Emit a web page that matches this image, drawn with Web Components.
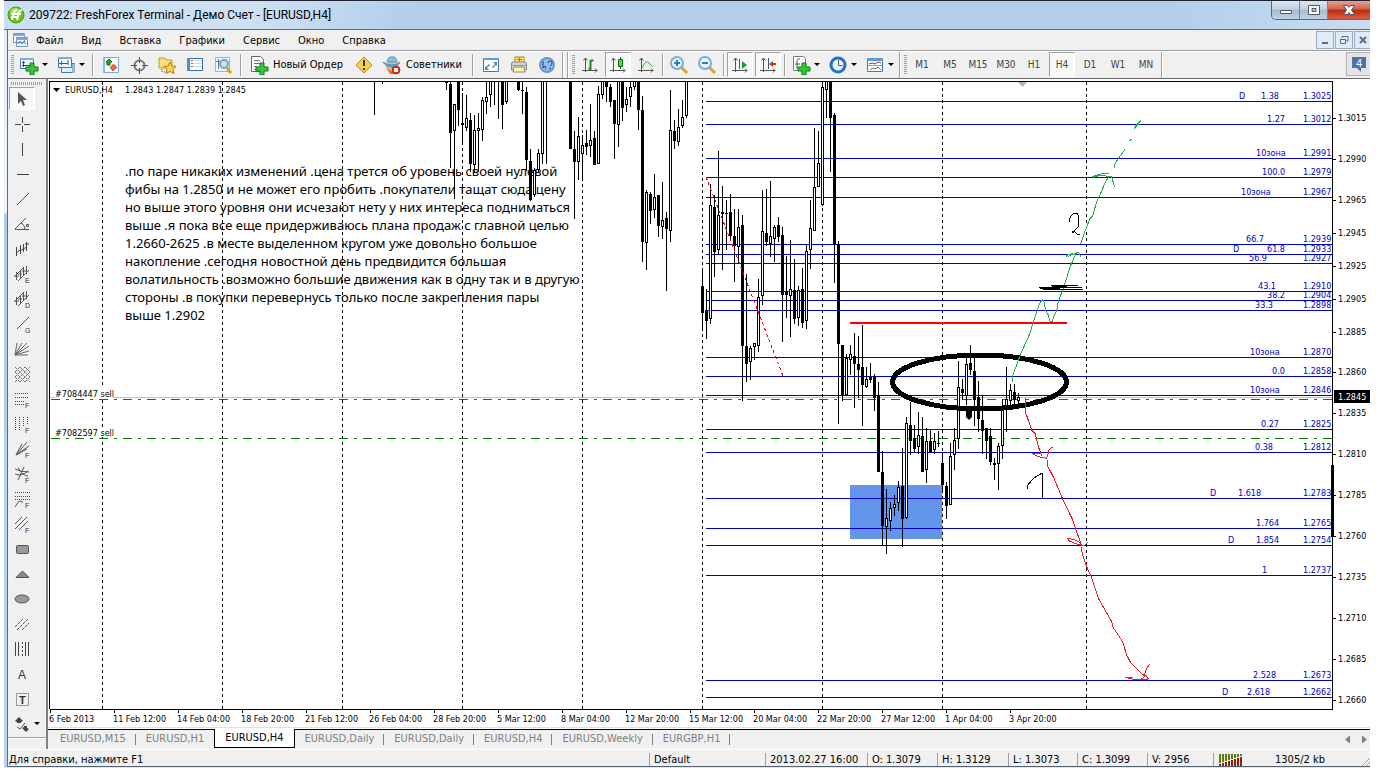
<!DOCTYPE html>
<html lang="ru">
<head>
<meta charset="utf-8">
<title>209722: FreshForex Terminal - Демо Счет - [EURUSD,H4]</title>
<style>
  body {
    margin: 0;
    background: #fff;
    font-family: "DejaVu Sans Condensed", "DejaVu Sans", sans-serif;
    font-size: 11px;
    color: #000;
  }
</style>
</head>
<body>
<terminal-window>
  <title-bar slot="title">209722: FreshForex Terminal - Демо Счет - [EURUSD,H4]</title-bar>
  <menu-bar slot="menu" items="Файл,Вид,Вставка,Графики,Сервис,Окно,Справка"></menu-bar>
  <tool-bar slot="tools">
    <tool-grip></tool-grip>
    <tool-button icon="newChart" label="Новый график" drop></tool-button>
    <tool-button icon="profiles" label="Профили" drop></tool-button>
    <tool-separator></tool-separator>
    <tool-button icon="market" label="Обзор рынка"></tool-button>
    <tool-button icon="target" label="Окно данных"></tool-button>
    <tool-button icon="navigator" label="Навигатор"></tool-button>
    <tool-button icon="terminal" label="Терминал"></tool-button>
    <tool-button icon="tester" label="Тестер"></tool-button>
    <tool-separator></tool-separator>
    <tool-button icon="order">Новый Ордер</tool-button>
    <tool-button icon="warning" label="MetaEditor"></tool-button>
    <tool-button icon="expert">Советники</tool-button>
    <tool-separator></tool-separator>
    <tool-button icon="fullscreen" label="Полный экран"></tool-button>
    <tool-button icon="print" label="Печать"></tool-button>
    <tool-button icon="help" label="Справка"></tool-button>
    <tool-separator end></tool-separator>
    <tool-separator end></tool-separator>
    <tool-grip></tool-grip>
    <tool-button icon="bars" label="Бары"></tool-button>
    <tool-button icon="candles" label="Свечи" pressed></tool-button>
    <tool-button icon="line" label="Линия"></tool-button>
    <tool-separator tight></tool-separator>
    <tool-button icon="zoomIn" label="Увеличить"></tool-button>
    <tool-button icon="zoomOut" label="Уменьшить"></tool-button>
    <tool-separator tight></tool-separator>
    <tool-button icon="autoScroll" label="Автопрокрутка" pressed></tool-button>
    <tool-button icon="shift" label="Сдвиг графика" pressed></tool-button>
    <tool-separator tight></tool-separator>
    <tool-button icon="indicators" label="Индикаторы" drop></tool-button>
    <tool-button icon="clock" label="Периоды" drop></tool-button>
    <tool-button icon="templates" label="Шаблоны" drop></tool-button>
    <tool-separator end></tool-separator>
    <tool-grip></tool-grip>
    <tool-button>M1</tool-button>
    <tool-button>M5</tool-button>
    <tool-button>M15</tool-button>
    <tool-button>M30</tool-button>
    <tool-button>H1</tool-button>
    <tool-button pressed>H4</tool-button>
    <tool-button>D1</tool-button>
    <tool-button>W1</tool-button>
    <tool-button>MN</tool-button>
    <tool-separator end></tool-separator>
    <chat-button slot="right" count="4"></chat-button>
  </tool-bar>
  <draw-bar slot="draw"></draw-bar>
  <price-chart slot="chart" symbol="EURUSD,H4" quotes="1.2843 1.2847 1.2839 1.2845">
    .по паре никаких изменений .цена трется об уровень своей нулевой<br>
    фибы на 1.2850 и не может его пробить .покупатели тащат сюда цену<br>
    но выше этого уровня они исчезают нету у них интереса подниматься<br>
    выше .я пока все еще придерживаюсь плана продаж с главной целью<br>
    1.2660-2625 .в месте выделенном кругом уже довольно большое<br>
    накопление .сегодня новостной день предвидится большая<br>
    волатильность .возможно большие движения как в одну так и в другую<br>
    стороны .в покупки перевернусь только после закрепления пары<br>
    выше 1.2902
  </price-chart>
  <chart-tabs slot="tabs" active="2" items="EURUSD,M15|EURUSD,H1|EURUSD,H4|EURUSD,Daily|EURUSD,Daily|EURUSD,H4|EURUSD,Weekly|EURGBP,H1"></chart-tabs>
  <status-bar slot="status"></status-bar>
</terminal-window>

<script>
const AXES = '<path d="M5.500 3v14M2 15.500h15M3.500 5.500l2-2.500 2 2.500M15 13.500l2 2-2 2" fill="none" stroke="#555"/>';

const icons = {
  logo: '<circle cx="10" cy="10" r="8" fill="#6fc31a" stroke="#4c9a0c"/><ellipse cx="9" cy="6" rx="5" ry="3" fill="#a4df5c"/><path d="M6 15l2-8q1-2 3-2M5 9h10M11 15l2-8q1-2 3-2M5 12h8" fill="none" stroke="#fff" stroke-width="2"/>',
  doc: '<path d="M3.500 3.500h11v9h-11zM6.500 7.500h11v9h-11z" fill="#f7fbff" stroke="#6b93c6"/><path d="M3 4h12v2H3zM6 8h12v2H6z" fill="#80a8d8"/><path d="M8 14l2-3 2 3 2-3 2 3" fill="none" stroke="#5b86ba"/>',
  newChart: '<path d="M1.500 3.500h13v10h-13z" fill="#eef7ff" stroke="#3f78b0"/><path d="M1 3h14v2H1z" fill="#79aee2"/><path d="M4.500 6v6M3 10.500h9M3 7.500h3" stroke="#446"/><path d="M11 8h4v4h4v4h-4v4h-4v-4H7v-4h4z" fill="#3cc440" stroke="#087c12"/>',
  profiles: '<path d="M5.500 8.500h13v9h-13z" fill="#e0eefc" stroke="#3f78b0"/><path d="M16 9h3v9h-3z" fill="#90b8dd"/><path d="M2.500 2.500h13v10h-13z" fill="#eef7ff" stroke="#3f78b0"/><path d="M2 2h14v2H2z" fill="#79aee2"/><path d="M5.500 6v4M3 8.500h9M12 5v5" stroke="#557"/>',
  market: '<path d="M2.500 2.500h15v15h-15z" fill="#f5faff" stroke="#7fa9d4"/><path d="M2 3h2v14H2z" fill="#8dbbe4"/><path d="M8 4l3 3H9v3H6V7H5z" fill="#23a52c" stroke="#0a7515"/><path d="M12 16l-3-4h2v-2h3v2h2z" fill="#ef6c34" stroke="#c8552c"/>',
  target: '<circle cx="10.500" cy="10.500" r="5" fill="none" stroke="#777" stroke-width="2"/><path d="M10.500 2v6M10.500 13v6M2 10.500h6M13 10.500h6" stroke="#555"/>',
  navigator: '<path d="M2 3h6l1 2h6v8H2z" fill="#f9de80" stroke="#c09a31"/><path d="M5 14v4M7 17h3" stroke="#555" stroke-dasharray="1 1"/><path d="M13 7l2 4 4 .5-3 3 1 4-4-2-4 2 1-4-3-3 4-.5z" fill="#ffd24e" stroke="#b57a10"/>',
  terminal: '<path d="M2.500 3.500h15v12h-15z" fill="#fff" stroke="#2e71b8"/><path d="M2 3h3v13H2z" fill="#4a90d4"/><path d="M6 5.500h2M6 8.500h2M6 11.500h2" stroke="#c44"/><path d="M9 5.500h8M9 8.500h8M9 11.500h8" stroke="#cfdae6"/>',
  tester: '<path d="M2.500 2.500h14v14h-14z" fill="#eef4fa" stroke="#9bb4d0"/><path d="M5.500 4v10M3 6.500h6M13 4v8" stroke="#777"/><circle cx="11" cy="9" r="4" fill="#c7e3f7" stroke="#7ba4c4" stroke-width="2"/><path d="M14 13l4 5" stroke="#d9a521" stroke-width="3"/>',
  order: '<path d="M2.500 1.500h9l3 3v12h-12z" fill="#fff" stroke="#666"/><path d="M5 5.500h6M5 8.500h6M5 11.500h3M5 14.500h3" stroke="#777"/><path d="M11 8h4v4h4v4h-4v4h-4v-4H7v-4h4z" fill="#3cc440" stroke="#087c12"/>',
  warning: '<path d="M10 2l8 8-8 8-8-8z" fill="#f9d04d" stroke="#b98a0f"/><path d="M10 5v6M10 13v2" stroke="#3b3413" stroke-width="2"/>',
  expert: '<circle cx="10" cy="12" r="6" fill="#f6b766"/><path d="M5 12q4 7 9 4l-3 3H8z" fill="#d56a22"/><path d="M5 7q1-6 5-5 4-1 5 5z" fill="#80c4ee" stroke="#4a93c0"/><path d="M1 7q9 6 17 0-2 5-8 5T1 7z" fill="#5faade" stroke="#4a93c0"/><circle cx="14" cy="15" r="4" fill="#dc2f1b" stroke="#b5301e"/><path d="M12 13h4v4h-4z" fill="#fff"/>',
  fullscreen: '<path d="M2.500 3.500h15v13h-15z" fill="#fff" stroke="#3e78b3"/><path d="M2 3h16v2H2z" fill="#5d9cd8"/><path d="M12 7h4v4l-1-1-3 3-1-1 3-3zM4 11l1 1 3-3 1 1-3 3 2 2H4z" fill="#5585b3"/>',
  print: '<path d="M6 8V2h9v6" fill="#ffe36b" stroke="#a98414"/><path d="M8 4.500h5M10.500 3v4" stroke="#a77f0b"/><path d="M2.500 9q0-2 2-2h11q2 0 2 2v6h-15z" fill="#d4d4d4" stroke="#888"/><path d="M5 12h10l1 5H4z" fill="#fff49a" stroke="#888"/><path d="M3 10.500h14" stroke="#999"/>',
  help: '<circle cx="10" cy="10" r="7" fill="#90bdec" stroke="#6c97c4" stroke-width="2"/><path d="M6 6v7l2-2 1 3M11 8q0-2 2-2t2 2-2 3M13 12.500v2" fill="none" stroke="#173f73"/>',
  bars: AXES + '<path d="M10.500 5v10M10.500 13.500h-2M10.500 5.500h3" stroke="#148a20" stroke-width="2" fill="none"/>',
  candles: AXES + '<path d="M12.500 2v12" stroke="#0b7418"/><path d="M10.500 4.500h4v7h-4z" fill="#4cd656" stroke="#0b7418"/>',
  line: AXES + '<path d="M6 13q4-9 7-5l4 4" fill="none" stroke="#3aa046"/>',
  zoomIn: '<path d="M12 12l6 6" stroke="#d7a726" stroke-width="3"/><circle cx="8" cy="8" r="6" fill="#e5f5ff" stroke="#78afd8" stroke-width="2"/><path d="M8 5v6M5 8h6" stroke="#3c7cac" stroke-width="2"/>',
  zoomOut: '<path d="M12 12l6 6" stroke="#d7a726" stroke-width="3"/><circle cx="8" cy="8" r="6" fill="#e5f5ff" stroke="#78afd8" stroke-width="2"/><path d="M5 8h6" stroke="#3c7cac" stroke-width="2"/>',
  autoScroll: AXES + '<path d="M9.500 4v10" stroke="#555"/><path d="M12 6l5 4-5 4z" fill="#1f9e2c"/>',
  shift: AXES + '<path d="M10.500 3v11" stroke="#357"/><path d="M11 9l4-3v2h3v2h-3v2z" fill="#c33a12"/>',
  indicators: '<path d="M3.500 1.500h9l2 2v12h-12v-14z" fill="#fff" stroke="#777"/><path d="M9 4q-3-1-3 3v7M4 9h5" fill="none" stroke="#555"/><path d="M11 8h4v4h4v4h-4v4h-4v-4H7v-4h4z" fill="#2fcc32" stroke="#087c12"/>',
  clock: '<circle cx="10" cy="10" r="7" fill="#eaf5ff" stroke="#1f70c8" stroke-width="3"/><path d="M10.500 5v5.500h4" fill="none" stroke="#555"/>',
  templates: '<path d="M2.500 3.500h15v13h-15z" fill="#fff" stroke="#3e78b3"/><path d="M2 3h16v3H2z" fill="#5d9cd8"/><path d="M4 9l3-1 3 1 3-2 3 1" fill="none" stroke="#a33317"/><path d="M3 10.500h14" stroke="#7fa8d2"/><path d="M5 15l3-2 2 1 3-2 3 3" fill="none" stroke="#2d9440"/>',

  cursor: '<path d="M6 3v12l3-3 2 5 2-1-2-5h4z" fill="#555"/>',
  cross: '<path d="M10.500 3v6M10.500 12v6M3 10.500h6M12 10.500h6" stroke="#444"/>',
  vline: '<path d="M10.500 4v13" stroke="#444"/>',
  hline: '<path d="M5 10.500h12" stroke="#444"/>',
  trend: '<path d="M5 16L17 4" stroke="#555"/>',
  angle: '<path d="M3 15.500h14M3 15L14 4M9 9q4 2 4 6" fill="none" stroke="#555"/><path d="M14.500 10.500h2v2h-2z" fill="none" stroke="#555"/>',
  cycle: '<path d="M4.500 8v9M4 14l4-3M8.500 6v9M8 12l3-2M11.500 5v8M11 10l4-2M14.500 3v9M13 5h4" fill="none" stroke="#444"/>',
  chanE: '<path d="M2 13L12 3M6 17L17 6M4.500 8v8M8.500 6v8M11.500 4v8M14.500 2v8M3 12h4M6 10h4M10 7h4" stroke="#555"/><text x="13" y="19">E</text>',
  chanD: '<path d="M2 13L12 3M6 17L17 6M4.500 8v8M8.500 6v8M11.500 4v8M14.500 2v8M3 12h4M6 10h4M10 7h4" stroke="#555"/><text x="13" y="19">D</text>',
  gannLine: '<path d="M5 15L17 3" stroke="#555"/><text x="13" y="19">G</text>',
  gannFan: '<path d="M3 16L5 4M3 16L10 4M3 16L15 4M3 16L17 7M3 16l14-4M3 16h13" stroke="#666"/>',
  gannGrid: '<path d="M3 3l15 15M3 8l10 10M8 3l10 10M3 13l5 5M13 3l5 5M3 8l5-5M3 13L13 3M3 18L18 3M8 18L18 8M13 18l5-5" stroke="#777" stroke-dasharray="3 1"/>',
  fibo: '<path d="M3 4.500h14M3 8.500h14M3 12.500h9M3 15.500h9" stroke="#444" stroke-dasharray="1 1"/><text x="13" y="19">F</text>',
  fiboTime: '<path d="M3.500 3v14M7.500 3v14M11.500 3v10M15.500 3v8" stroke="#444" stroke-dasharray="1 1"/><text x="13" y="19">F</text>',
  fiboFan: '<path d="M4 16L15 3M4 16L17 7M4 16l11-6M4 16L10 5" stroke="#555"/><text x="13" y="19">F</text>',
  fiboArc: '<path d="M3 5q5 3 14 3M3 10q6 3 13-3M12 3L6 16M6 4q5 8 10 8" fill="none" stroke="#555"/><text x="13" y="19">F</text>',
  fiboExp: '<path d="M3 3.500h15M3 7.500h15M3 10.500h15" stroke="#444" stroke-dasharray="1 1"/><path d="M3 18l4-6 4 1" fill="none" stroke="#555"/><text x="13" y="19">F</text>',
  fiboChan: '<path d="M3 10l7-7M3 15L15 3M7 16l9-9" stroke="#555"/><text x="13" y="19">F</text>',
  rect: '<rect x="4.500" y="6.500" width="12" height="8" rx="1" fill="#999" stroke="#555"/>',
  triangle: '<path d="M4 13.500L10.500 7l6.500 6.500z" fill="#888" stroke="#555"/>',
  ellipse: '<ellipse cx="10" cy="10" rx="7" ry="4" fill="#999" stroke="#555"/>',
  channel: '<path d="M3 13l8-8M5 16L16 5M10 16l7-7" stroke="#555" stroke-dasharray="3 1"/>',
  cycles: '<path d="M3.500 3v14M6.500 3v14M13.500 3v14M16.500 3v14" stroke="#444"/><path d="M10.500 3v14" stroke="#444" stroke-dasharray="2 2"/>',
  text: '<text x="6" y="15" style="font-size:12px">A</text>',
  label: '<path d="M4.500 4.500h12v12h-12z" fill="none" stroke="#444" stroke-dasharray="1 1"/><text x="7" y="15" style="font-size:11px;font-weight:bold">T</text>',
  arrows: '<path d="M7 3l4 4-2 1v1H5V8L3 7zM14 18l-4-4 2-1v-1h3v2l2 1z" fill="#444"/><path d="M5 13l3 2 5-6" fill="none" stroke="#555"/>'
};

class AppIcon extends HTMLElement {
  constructor() {
    super();
    this.attachShadow({ mode: 'open' });
  }

  connectedCallback() {
    this.shadowRoot.innerHTML = `
      <style>
        :host { display: block; flex: none; width: 20px; height: 20px; }
        svg { display: block; width: 100%; height: 100%; }
        text { font-size: 7px; fill: #333; }
      </style>
      <svg viewBox="0 0 20 20" aria-hidden="true">${icons[this.getAttribute('name')] || ''}</svg>
    `;
  }
}
customElements.define('app-icon', AppIcon);

class TerminalWindow extends HTMLElement {
  constructor() {
    super();
    this.attachShadow({ mode: 'open' }).innerHTML = `
      <style>
        :host {
          display: block;
          margin: 0 12px 0 4px;
          overflow: hidden;
          border-top: 1px solid #1f2430;
          border-bottom: 1px solid #dbe6f2;
          background: linear-gradient(#dbe9f8, #eef5fc 211px, #aecdec 214px, #b9d3ee);
        }
        .frame {
          margin-left: 3px;
          border-left: 1px solid #5f6e7d;
          border-bottom: 1px solid #53606e;
          background: #f0f0f0;
        }
        .work {
          display: grid;
          grid-template-columns: 40px minmax(0, 1fr);
        }
      </style>
      <slot name="title"></slot>
      <div class="frame">
        <slot name="menu"></slot>
        <slot name="tools"></slot>
        <div class="work">
          <slot name="draw"></slot>
          <main>
            <slot name="chart"></slot>
            <slot name="tabs"></slot>
          </main>
        </div>
        <slot name="status"></slot>
      </div>
    `;
  }
}
customElements.define('terminal-window', TerminalWindow);

class TitleBar extends HTMLElement {
  constructor() {
    super();
    this.attachShadow({ mode: 'open' }).innerHTML = `
      <style>
        :host {
          display: flex;
          align-items: flex-start;
          height: 28px;
          border-bottom: 1px solid #5f6e7d;
          background: linear-gradient(100deg, #c9dff4, #cfe1f3 18%, #b1cfeb 30%, #b1cfeb 85%, #cadcf0);
          font-family: Roboto, "Noto Sans", sans-serif;
          font-size: 12px;
        }
        .caption {
          display: flex;
          flex: 1;
          align-items: center;
          gap: 3px;
          height: 28px;
          padding-left: 2px;
        }
        .buttons {
          display: flex;
          border: 1px solid #55697f;
          border-width: 0 0 1px 1px;
          border-radius: 0 0 0 5px;
          overflow: hidden;
        }
        button {
          width: 28px;
          height: 18px;
          padding: 0;
          border: 0;
          border-right: 1px solid #6f8298;
          background: linear-gradient(#d9e4ef, #c3d2e2 45%, #a7bbd0 50%, #bed2e6);
        }
        .close {
          width: 42px;
          border-right: 0;
          background: linear-gradient(#e6a493, #d3604b 45%, #bb2a14 50%, #d8603f);
        }
        svg { display: block; margin: auto; }
      </style>
      <div class="caption"><app-icon name="logo"></app-icon><span><slot></slot></span></div>
      <div class="buttons">
        <button aria-label="Свернуть"><svg width="14" height="12"><path d="M1.500 6.500h11v3h-11z" fill="#fff" stroke="#505868"/></svg></button>
        <button aria-label="Развернуть"><svg width="14" height="12"><path d="M1.500 1.500h11v9h-11zM5 4.500h4v3H5z" fill="#fff" fill-rule="evenodd" stroke="#505868"/></svg></button>
        <button class="close" aria-label="Закрыть"><svg width="14" height="12"><path d="M1.500 1.500h4l1.500 2 1.500-2h4L9.500 6l3 4.500h-4L7 8.500l-1.500 2h-4l3-4.500z" fill="#fff" stroke="#505868"/></svg></button>
      </div>
    `;
  }
}
customElements.define('title-bar', TitleBar);

class MenuBar extends HTMLElement {
  constructor() {
    super();
    this.attachShadow({ mode: 'open' });
  }

  connectedCallback() {
    const items = this.getAttribute('items').split(',');
    this.shadowRoot.innerHTML = `
      <style>
        :host {
          display: flex;
          align-items: center;
          height: 20px;
          padding-left: 2px;
          border-bottom: 1px solid #a0a0a0;
        }
        nav { display: flex; flex: 1; margin-left: -3px; }
        nav button {
          padding: 0 9px;
          border: 0;
          background: none;
          font: inherit;
          font-size: 11px;
          color: inherit;
        }
        .mdi { display: flex; gap: 1px; }
        .mdi button {
          width: 18px;
          height: 18px;
          padding: 0;
          border: 1px solid #9aabbc;
          background: #dfecf8;
        }
        .mdi svg { display: block; margin: auto; }
        .mdi button:last-child { margin-right: -2px; }
      </style>
      <app-icon name="doc"></app-icon>
      <nav>${items.map((item) => `<button>${item}</button>`).join('')}</nav>
      <div class="mdi">
        <button aria-label="Свернуть"><svg width="12" height="12"><path d="M3 8h6v2H3z" fill="#5f6f80"/></svg></button>
        <button aria-label="Восстановить"><svg width="12" height="12"><path d="M4 4V2.500h6V7H8M2.500 5.500h5v4h-5z" fill="none" stroke="#5f6f80"/><path d="M4 2h6v1H4zM2 5h6v1H2z" fill="#5f6f80"/></svg></button>
        <button aria-label="Закрыть"><svg width="12" height="12"><path d="M3 3l6 6M9 3L3 9" stroke="#5f6f80" stroke-width="2"/></svg></button>
      </div>
    `;
  }
}
customElements.define('menu-bar', MenuBar);

class ToolBar extends HTMLElement {
  constructor() {
    super();
    this.attachShadow({ mode: 'open' }).innerHTML = `
      <style>
        :host {
          display: flex;
          height: 26px;
          padding-left: 2px;
          border-top: 1px solid #fff;
          border-bottom: 1px solid #696969;
        }
        .tools { display: flex; flex: 1; min-width: 0; }
      </style>
      <div class="tools"><slot></slot></div>
      <slot name="right"></slot>
    `;
  }
}
customElements.define('tool-bar', ToolBar);

class ToolGrip extends HTMLElement {
  constructor() {
    super();
    this.attachShadow({ mode: 'open' }).innerHTML = `
      <style>
        :host { display: block; flex: none; width: 5px; padding: 3px 0; box-sizing: border-box; }
        i { display: block; width: 3px; height: 100%; margin-left: 1px; background: repeating-linear-gradient(#a0a0a0 0 1px, transparent 1px 2px); }
      </style>
      <i></i>
    `;
  }
}
customElements.define('tool-grip', ToolGrip);

class ToolSeparator extends HTMLElement {
  constructor() {
    super();
    this.attachShadow({ mode: 'open' }).innerHTML = `
      <style>
        :host { display: block; flex: none; box-sizing: border-box; width: 8px; padding: 2px 3px; }
        i { display: block; height: 100%; border-left: 1px solid #a0a0a0; border-right: 1px solid #fff; }
        :host([tight]) { width: 5px; padding: 2px 1px 2px 2px; }
        :host([end]) { width: 5px; padding: 0 2px 0 1px; }
      </style>
      <i></i>
    `;
  }
}
customElements.define('tool-separator', ToolSeparator);

class ToolButton extends HTMLElement {
  constructor() {
    super();
    this.attachShadow({ mode: 'open' });
  }

  connectedCallback() {
    const icon = this.getAttribute('icon');
    const label = this.getAttribute('label');
    this.shadowRoot.innerHTML = `
      <style>
        :host { display: block; flex: none; }
        button {
          display: flex;
          align-items: center;
          box-sizing: border-box;
          min-width: 28px;
          height: 25px;
          padding: 0 3px;
          border: 1px solid transparent;
          background: none;
          font: inherit;
          font-size: 11px;
          color: #000;
        }
        .period { justify-content: center; padding: 0; font-size: 10px; color: #444; }
        :host([pressed]) button {
          border-color: #a0a0a0 #fff #fff #a0a0a0;
          background: #f8f8f8;
          min-width: 26px;
          padding: 0 2px;
          margin: 0 1px;
        }
        .caret { border: 3px solid transparent; border-top-color: #000; border-bottom: 0; margin-left: 3px; }
        .text { margin: 0 3px 0 4px; }
      </style>
      <button class="${icon ? '' : 'period'}" ${label ? `aria-label="${label}"` : ''}>
        ${icon ? `<app-icon name="${icon}"></app-icon>` : ''}
        ${label ? '' : `<span class="${icon ? 'text' : ''}"><slot></slot></span>`}
        ${this.hasAttribute('drop') ? '<span class="caret"></span>' : ''}
      </button>
    `;
  }
}
customElements.define('tool-button', ToolButton);

class ChatButton extends HTMLElement {
  constructor() {
    super();
    this.attachShadow({ mode: 'open' });
  }

  connectedCallback() {
    this.shadowRoot.innerHTML = `
      <style>
        :host { display: block; }
        button {
          width: 24px;
          height: 24px;
          padding: 0;
          border: 1px solid #b4b4b4;
          border-right: 0;
          background: #e4e4e4;
        }
        svg { display: block; margin: auto; }
        text { font-size: 11px; fill: #fff; }
      </style>
      <button aria-label="Сообщения">
        <svg width="18" height="18"><path d="M2 2h14v11h-5v4l-4-4H2z" fill="#4a72ad"/><text x="6" y="12">${this.getAttribute('count')}</text></svg>
      </button>
    `;
  }
}
customElements.define('chat-button', ChatButton);

class DrawBar extends HTMLElement {
  constructor() {
    super();
    this.attachShadow({ mode: 'open' });
  }

  connectedCallback() {
    const tools = ['cursor', 'cross', 'vline', 'hline', 'trend', 'angle', 'cycle', 'chanE', 'chanD',
      'gannLine', 'gannFan', 'gannGrid', 'fibo', 'fiboTime', 'fiboFan', 'fiboArc', 'fiboExp', 'fiboChan',
      'rect', 'triangle', 'ellipse', 'channel', 'cycles', 'text', 'label', 'arrows'];
    this.shadowRoot.innerHTML = `
      <style>
        :host {
          display: block;
          box-sizing: border-box;
          border-right: 2px solid #808080;
          padding: 3px 0 0 1px;
        }
        .grip { height: 3px; margin: 0 3px 2px 2px; background: repeating-linear-gradient(90deg, #a0a0a0 0 1px, transparent 1px 2px); }
        button {
          display: flex;
          align-items: center;
          box-sizing: border-box;
          width: 26px;
          height: 23px;
          margin-bottom: 2px;
          padding: 0 2px;
          border: 1px solid transparent;
          background: none;
        }
        button.on { border-color: #a0a0a0 #fff #fff #a0a0a0; background: #f8f8f8; }
        .more { width: 36px; }
        .caret { border: 3px solid transparent; border-top-color: #000; border-bottom: 0; margin-left: 2px; }
        hr { margin: 0 0 0 -1px; border: 0; border-top: 1px solid #a0a0a0; border-bottom: 1px solid #fff; }
      </style>
      <div class="grip"></div>
      ${tools.map((name, i) => `
        <button aria-label="${name}" class="${i === 0 ? 'on' : i === tools.length - 1 ? 'more' : ''}">
          <app-icon name="${name}"></app-icon>${i === tools.length - 1 ? '<span class="caret"></span>' : ''}
        </button>`).join('')}
      <hr>
    `;
  }
}
customElements.define('draw-bar', DrawBar);

// x, high, low, body top, body bottom, kind (1 = falling, 0 = rising, 2 = wick only)
const candles = [
  [374, 81, 115, 0, 0, 2], [382, 81, 84, 0, 0, 2], [446, 81, 90, 81, 83, 1],
  [450, 81, 168, 84, 133, 1], [454, 104, 199, 104, 131, 0], [458, 81, 126, 81, 110, 1],
  [462, 93, 143, 123, 125, 1], [466, 95, 131, 118, 128, 0], [470, 113, 172, 120, 164, 1],
  [474, 115, 173, 130, 165, 0], [478, 113, 172, 128, 131, 0], [482, 97, 141, 100, 130, 0],
  [486, 81, 114, 97, 102, 0], [490, 81, 107, 81, 95, 0], [494, 81, 105, 0, 0, 2],
  [498, 81, 119, 0, 0, 2], [502, 81, 129, 81, 105, 1], [506, 81, 104, 81, 102, 0],
  [518, 81, 91, 81, 90, 1], [522, 81, 114, 90, 91, 1], [526, 87, 171, 92, 160, 1],
  [530, 149, 201, 161, 200, 1], [534, 168, 197, 170, 195, 0], [538, 149, 172, 153, 170, 0],
  [542, 81, 164, 81, 154, 0], [546, 81, 164, 0, 0, 2], [570, 81, 149, 81, 149, 1],
  [574, 131, 219, 149, 162, 1], [578, 117, 180, 136, 162, 0], [582, 135, 180, 145, 154, 0],
  [586, 130, 155, 143, 147, 1], [590, 104, 157, 140, 146, 0], [594, 131, 165, 138, 165, 1],
  [598, 86, 164, 94, 164, 0], [602, 81, 99, 81, 95, 0], [606, 81, 102, 81, 87, 1],
  [610, 84, 107, 87, 102, 1], [614, 100, 159, 100, 124, 1], [618, 81, 147, 81, 125, 0],
  [622, 81, 121, 81, 108, 1], [626, 87, 112, 99, 105, 0], [630, 81, 107, 87, 97, 0],
  [634, 81, 90, 81, 87, 0], [638, 81, 130, 81, 110, 1], [642, 96, 262, 110, 242, 1],
  [646, 190, 270, 192, 243, 0], [650, 192, 224, 194, 211, 1], [654, 174, 218, 197, 210, 0],
  [658, 195, 237, 195, 226, 1], [662, 182, 239, 220, 227, 0], [666, 212, 291, 218, 229, 1],
  [670, 90, 242, 130, 231, 0], [674, 120, 149, 131, 141, 1], [678, 109, 146, 127, 142, 0],
  [682, 100, 128, 117, 126, 0], [686, 81, 118, 81, 116, 0],
  [702, 271, 330, 286, 313, 1], [706, 289, 339, 310, 321, 1], [710, 184, 324, 205, 319, 0],
  [714, 195, 277, 207, 252, 1], [718, 151, 254, 215, 250, 0], [722, 186, 270, 212, 214, 1],
  [726, 200, 250, 213, 214, 1], [730, 194, 241, 212, 236, 1], [734, 209, 282, 236, 246, 1],
  [738, 209, 263, 227, 247, 0], [742, 215, 401, 225, 346, 1], [746, 274, 382, 346, 364, 1],
  [750, 346, 380, 348, 362, 0], [754, 343, 360, 343, 347, 0], [758, 279, 352, 297, 346, 0],
  [762, 190, 305, 231, 296, 0], [766, 189, 246, 233, 242, 1], [770, 181, 257, 236, 244, 0],
  [774, 225, 262, 227, 239, 0], [778, 217, 242, 225, 237, 1], [782, 227, 342, 235, 295, 1],
  [786, 256, 318, 292, 295, 1], [790, 240, 337, 289, 296, 0], [794, 259, 324, 290, 319, 1],
  [798, 286, 326, 290, 318, 0], [802, 268, 328, 289, 323, 1], [806, 245, 329, 251, 321, 0],
  [810, 200, 269, 228, 250, 0], [814, 128, 231, 187, 231, 0], [818, 131, 187, 163, 187, 0],
  [822, 81, 206, 87, 205, 0], [826, 81, 118, 81, 90, 0], [830, 81, 172, 81, 118, 1],
  [834, 113, 283, 115, 244, 1], [838, 241, 424, 244, 344, 1], [842, 345, 401, 345, 395, 1],
  [846, 354, 395, 358, 395, 0], [850, 345, 375, 354, 360, 0], [854, 333, 408, 356, 364, 1],
  [858, 336, 398, 364, 370, 1], [862, 325, 426, 367, 385, 1], [866, 367, 388, 379, 387, 0],
  [870, 363, 383, 377, 380, 1], [874, 374, 411, 376, 398, 1], [878, 382, 472, 395, 472, 1],
  [882, 451, 546, 472, 526, 1], [886, 489, 554, 518, 527, 0], [890, 502, 531, 508, 521, 0],
  [894, 495, 516, 504, 508, 0], [898, 481, 511, 487, 503, 0], [902, 448, 547, 486, 519, 1],
  [906, 417, 519, 423, 518, 0], [910, 402, 455, 425, 441, 1], [914, 425, 452, 438, 449, 1],
  [918, 412, 454, 435, 447, 0], [922, 417, 472, 436, 472, 1], [926, 428, 483, 441, 470, 0],
  [930, 430, 452, 441, 452, 1], [934, 433, 454, 441, 450, 0], [938, 431, 447, 443, 444, 1],
  [942, 453, 490, 463, 485, 1], [946, 482, 519, 486, 506, 1], [950, 443, 505, 456, 505, 0],
  [954, 428, 470, 440, 455, 0], [958, 361, 449, 387, 439, 0], [962, 379, 400, 389, 393, 1],
  [966, 358, 405, 364, 396, 0], [970, 345, 375, 363, 370, 1], [974, 358, 426, 371, 400, 1],
  [978, 381, 432, 397, 419, 1], [982, 395, 454, 420, 431, 1], [986, 428, 459, 428, 441, 1],
  [990, 428, 465, 436, 462, 1], [994, 458, 480, 463, 465, 1], [998, 443, 490, 446, 464, 0],
  [1002, 399, 459, 409, 446, 0], [1006, 367, 432, 399, 409, 0], [1010, 384, 405, 390, 401, 0],
  [1014, 384, 405, 392, 400, 1], [1018, 393, 405, 397, 401, 0]
];

// y, price, label x, label, x of the "D" mark
const levels = [
  [101, '1.3025', 1261, '1.38', 1239], [124, '1.3012', 1267, '1.27'], [158, '1.2991', 1256, '10зона'],
  [177, '1.2979', 1262, '100.0'], [197, '1.2967', 1241, '10зона'], [244, '1.2939', 1246, '66.7'],
  [254, '1.2933', 1267, '61.8', 1233], [263, '1.2927', 1249, '56.9'], [291, '1.2910', 1258, '43.1'],
  [300, '1.2904', 1267, '38.2'], [310, '1.2898', 1255, '33.3'], [357, '1.2870', 1250, '10зона'],
  [376, '1.2858', 1272, '0.0'], [395, '1.2846', 1250, '10зона'], [429, '1.2825', 1261, '0.27'],
  [452, '1.2812', 1255, '0.38'], [498, '1.2783', 1238, '1.618', 1210], [528, '1.2765', 1256, '1.764'],
  [545, '1.2754', 1256, '1.854', 1228], [575, '1.2737', 1262, '1'], [680, '1.2673', 1253, '2.528'],
  [697, '1.2662', 1247, '2.618', 1222]
];

const prices = [
  [118, '1.3015'], [159, '1.2990'], [200, '1.2965'], [233, '1.2945'], [266, '1.2925'], [299, '1.2905'],
  [332, '1.2885'], [372, '1.2860'], [413, '1.2835'], [454, '1.2810'], [495, '1.2785'], [536, '1.2760'],
  [577, '1.2735'], [618, '1.2710'], [659, '1.2685'], [700, '1.2660']
];

const dates = ['6 Feb 2013', '11 Feb 12:00', '14 Feb 04:00', '18 Feb 20:00', '21 Feb 12:00', '26 Feb 04:00',
  '28 Feb 20:00', '5 Mar 12:00', '8 Mar 04:00', '12 Mar 20:00', '15 Mar 12:00', '20 Mar 04:00',
  '22 Mar 20:00', '27 Mar 12:00', '1 Apr 04:00', '3 Apr 20:00'];

const separators = [102, 222, 342, 462, 582, 702, 822, 942, 1086];

class PriceChart extends HTMLElement {
  constructor() {
    super();
    this.attachShadow({ mode: 'open' });
  }

  connectedCallback() {
    this.render();
  }

  drawCandle([x, high, low, top, bottom, kind]) {
    const wick = `<rect x="${x}" y="${high}" width="1" height="${low - high}"/>`;
    if (kind === 2) return wick;
    const body = `<rect x="${x - 1}" y="${top}" width="3" height="${Math.max(1, bottom - top)}"/>`;
    if (kind === 1) return wick + body;
    return wick + body + `<rect x="${x}" y="${top + 1}" width="1" height="${bottom - top - 2}" fill="#fff"/>`;
  }

  drawLevel([y, price, x, label, mark]) {
    return `
      <text x="1303" y="${y - 2}">${price}</text>
      <text x="${x}" y="${y - 2}">${label}</text>
      ${mark ? `<text x="${mark}" y="${y - 2}">D</text>` : ''}`;
  }

  render() {
    this.shadowRoot.innerHTML = `
      <style>
        :host {
          display: block;
          position: relative;
          background: #fff;
        }
        svg { display: block; width: 100%; }
        text { font-size: 9px; white-space: pre; }
        .note {
          position: absolute;
          left: 77px;
          top: 83px;
          margin: 0;
          font-family: "Noto Sans", "Open Sans", sans-serif;
          font-size: 13px;
          line-height: 18px;
          white-space: nowrap;
        }
        .hand * { vector-effect: non-scaling-stroke; }
      </style>
      <svg viewBox="48 79 1322 650">
        <g shape-rendering="crispEdges">
          <rect x="850" y="485" width="92" height="54" fill="#6495ed"/>
          <path d="${separators.map((x) => `M${x + .5} 82V709`).join('')}" stroke="#000" stroke-dasharray="3 3"/>
          <path d="${levels.map(([y]) => `M706 ${y + .5}H1332`).join('')}" stroke="#0000c8"/>
          <path d="M50 397.500H1332" stroke="#c0c0c0"/>
          <path d="M55 388h58v10h-58zM55 427h58v10h-58z" fill="#fff"/>
          <path d="M51 399.500H1332M51 438.500H1332" stroke="#008000" stroke-dasharray="9 6 3 6"/>
          ${candles.map(this.drawCandle).join('')}
          <path d="M706 177L783 376" stroke="#f00" stroke-dasharray="3 3" fill="none"/>
          <rect x="850" y="322" width="217" height="2" fill="#f00"/>
          <path d="M49.500 709V81.500H1332.500V709.500H49.500" fill="none" stroke="#000"/>
          <rect x="1331" y="465" width="3" height="72"/>
          <path d="${prices.map(([y]) => `M1333 ${y + .5}h3`).join('')}${dates.map((d, i) => `M${50.5 + i * 64} 710v3`).join('')}" stroke="#000"/>
          <rect x="1334" y="390" width="36" height="13"/>
          <path d="M48 727.500H1370" stroke="#e0e0e0"/>
        </g>
        <path d="M1018 82h9l-4.500 5z" fill="#b4b4b4"/>
        <path d="M53 88h7l-3.500 4z"/>

        <ellipse cx="979.500" cy="382" rx="87" ry="27" fill="none" stroke="#000" stroke-width="5" shape-rendering="crispEdges"/>
        <path d="M966 409h6v8l-3 3-3-3z"/>
        <g class="hand" fill="none" stroke="#22b14c" shape-rendering="crispEdges" transform="translate(1000 100) scale(.33333)">
          <path d="M37 845V830L62 762L90 700L100 665L118 612L127 598L133 608L137 632L145 645L150 664H157L163 645L170 632L175 605L192 560L210 500L222 475L232 455"/>
          <path d="M198 470L205 463L222 463L235 455M205 470L220 458M232 458L237 459L243 470"/>
          <path d="M242 433L252 402L270 355L278 348L290 305L300 285L312 255L327 228"/>
          <path d="M277 230L305 221H328M280 232L300 226L335 230L344 262"/>
          <path d="M343 205L345 192L355 175L365 162L375 148M388 122L395 118M402 88L423 62L408 75L403 88"/>
        </g>
        <g class="hand" fill="none" stroke="#ed1c24" shape-rendering="crispEdges" transform="translate(830 310) scale(.33333)">
          <path d="M586 263V305L605 360L615 370L625 410L635 437M632 432L606 430L625 440L650 445L658 418L668 411"/>
          <path d="M652 450L654 470L672 505L697 565L728 630L740 665L755 708M750 697L735 690L713 685L716 692L735 700L762 708L773 696"/>
          <path d="M753 712L758 735L772 775L782 795L805 865L845 935L848 950L878 995L890 1035L902 1058L943 1098"/>
          <path d="M886 1102L910 1103L895 1105L910 1108L955 1107L948 1096L935 1107M943 1095L950 1075L959 1062"/>
        </g>
        <g class="hand" fill="none" stroke="#000" shape-rendering="crispEdges" transform="translate(1000 100) scale(.33333)">
          <path d="M117 562H245M152 556H233M130 568H248M155 559L200 561M118 564L180 565"/>
          <path d="M208 365L211 350L220 340H232L236 350V380L217 397L224 395L230 402L240 404"/>
          <path d="M82 1167V1157L100 1135L125 1120H127V1193"/>
        </g>

        <g fill="#0000c8">${levels.map(this.drawLevel).join('')}</g>
        ${prices.map(([y, price]) => `<text x="1338" y="${y + 3}">${price}</text>`).join('')}
        <text x="1338" y="400" fill="#fff">1.2845</text>
        ${dates.map((date, i) => `<text x="${49 + i * 64}" y="722">${date}</text>`).join('')}
        <text x="65" y="93">${this.getAttribute('symbol')}</text>
        <text x="125" y="93">${this.getAttribute('quotes')}</text>
        <text x="55" y="397">#7084447 sell</text>
        <text x="55" y="436">#7082597 sell</text>
      </svg>
      <p class="note"><slot></slot></p>
    `;
  }
}
customElements.define('price-chart', PriceChart);

class ChartTabs extends HTMLElement {
  constructor() {
    super();
    this.attachShadow({ mode: 'open' });
  }

  connectedCallback() {
    const active = Number(this.getAttribute('active'));
    const tabs = this.getAttribute('items').split('|').map((name, i) => {
      const state = i === active ? 'on' : i === active - 1 ? 'last' : '';
      return `<button role="tab" class="${state}" aria-selected="${i === active}">${name}</button>`;
    });
    this.shadowRoot.innerHTML = `
      <style>
        :host {
          display: flex;
          align-items: flex-start;
          height: 20px;
        }
        .list { display: flex; flex: 1; border-top: 1px solid #000; padding-left: 2px; }
        button {
          height: 18px;
          padding: 0 10px 2px;
          border: 0;
          background: none;
          font: inherit;
          font-size: 11px;
          color: #808080;
        }
        .list button { background: linear-gradient(#808080, #808080) right 4px / 1px 11px no-repeat; }
        .list .last { background: none; }
        .list .on {
          margin-top: -1px;
          height: 19px;
          border: 1px solid #000;
          border-top: 0;
          background: #fff;
          color: #000;
        }
        .scroll { display: flex; gap: 12px; align-self: stretch; align-items: center; padding-right: 3px; border-top: 1px solid #000; }
        .scroll button { width: 5px; height: 8px; padding: 0; background: #808080; clip-path: polygon(0 50%, 100% 0, 100% 100%); }
        .scroll button:last-child { clip-path: polygon(100% 50%, 0 0, 0 100%); }
      </style>
      <div class="list" role="tablist">${tabs.join('')}</div>
      <div class="scroll"><button aria-label="Назад"></button><button aria-label="Вперед"></button></div>
    `;
  }
}
customElements.define('chart-tabs', ChartTabs);

class StatusBar extends HTMLElement {
  constructor() {
    super();
    const bars = [0, 1, 2, 3, 4, 5, 6, 7].map((i) =>
      `<path d="M${i * 3} 0h2v${9 - i}h-2z" fill="#5a7d0c"/><path d="M${i * 3} ${10 - i}h2V12h-2z" fill="#9a1c0c"/>`).join('');
    this.attachShadow({ mode: 'open' }).innerHTML = `
      <style>
        :host {
          display: grid;
          grid-template-columns: minmax(0, 1fr) 116px 102px 70px 71px 69px 70px 66px 157px;
          height: 16px;
          border-top: 1px solid #fff;
          overflow: hidden;
        }
        span {
          display: flex;
          align-items: flex-end;
          margin-top: 3px;
          padding-left: 4px;
          border-left: 1px solid #a0a0a0;
          line-height: 12px;
          white-space: nowrap;
        }
        span:first-of-type { border: 0; padding-left: 1px; }
        .traffic { gap: 32px; padding-left: 5px; }
        svg { display: block; }
        .grip { margin-left: auto; }
      </style>
      <span>Для справки, нажмите F1</span>
      <span>Default</span>
      <span>2013.02.27 16:00</span>
      <span>O: 1.3079</span>
      <span>H: 1.3129</span>
      <span>L: 1.3073</span>
      <span>C: 1.3099</span>
      <span>V: 2956</span>
      <span class="traffic"><svg width="24" height="12">${bars}</svg>1305/2 kb
        <svg class="grip" width="8" height="10"><path d="M0 10L8 2M4 10l4-4" stroke="#a0a0a0"/></svg></span>
    `;
  }
}
customElements.define('status-bar', StatusBar);
</script>
</body>
</html>
